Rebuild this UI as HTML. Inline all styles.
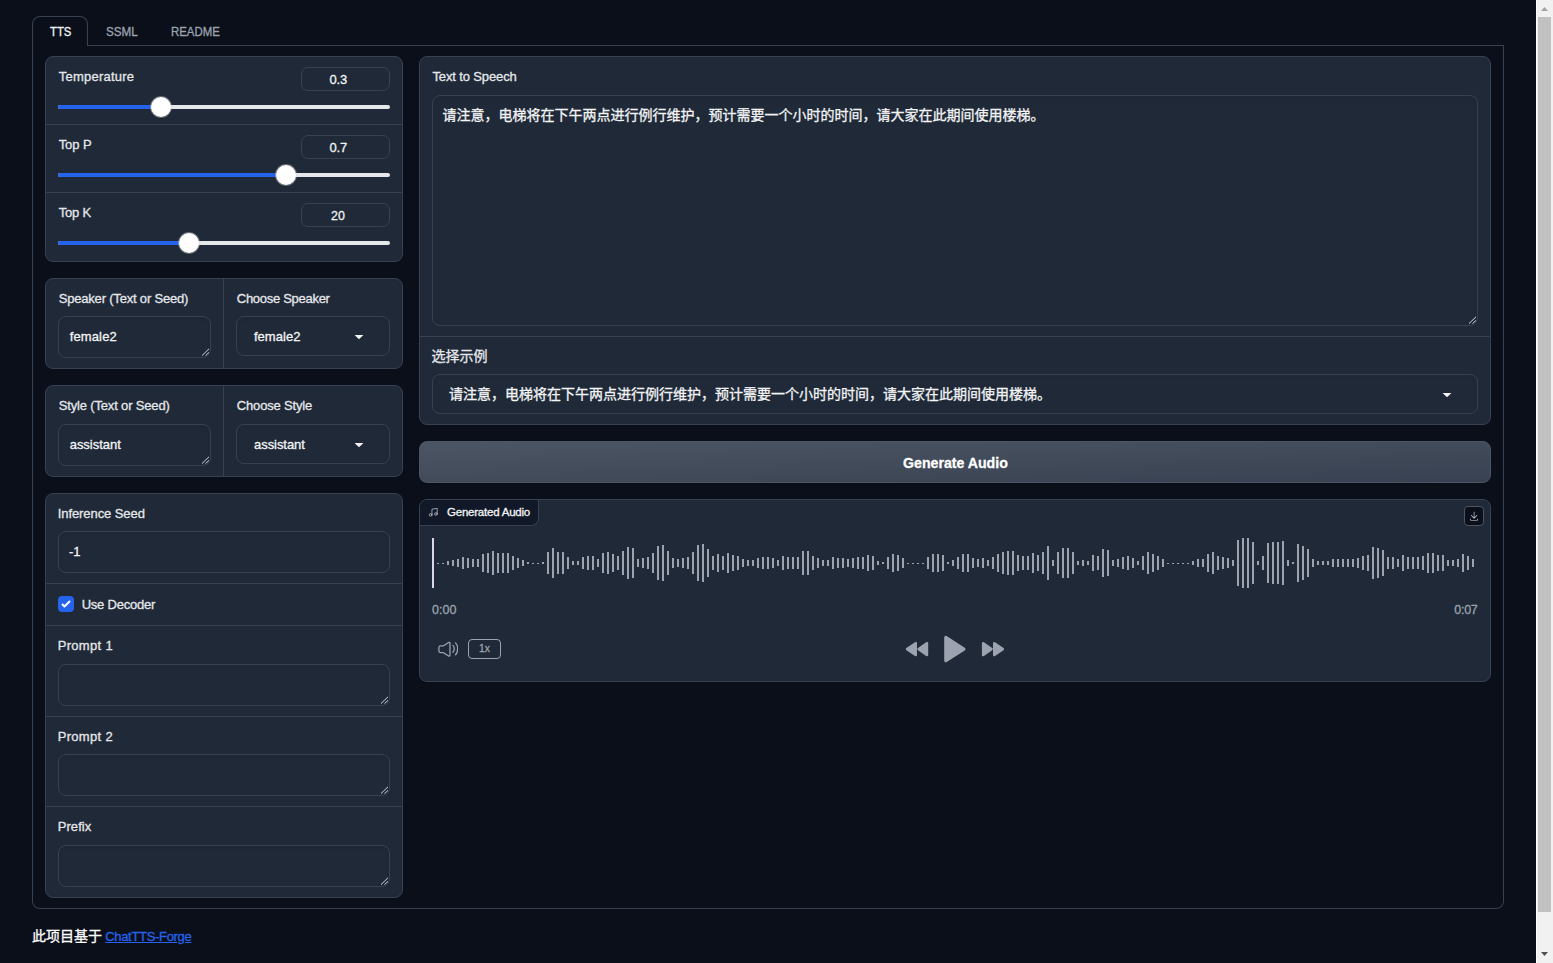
<!DOCTYPE html>
<html lang="zh">
<head>
<meta charset="utf-8">
<title>ChatTTS-Forge WebUI</title>
<style>
html,body{margin:0;padding:0;}
body{width:1553px;height:963px;overflow:hidden;background:#0b0f19;font-family:"Liberation Sans",sans-serif;color:#f3f4f6;}
#app{position:relative;width:1553px;height:963px;overflow:hidden;background:#0b0f19;}
.abs{position:absolute;display:block;}
.t{position:absolute;white-space:nowrap;line-height:1;-webkit-text-stroke:0.3px;font-family:"Liberation Sans",sans-serif;margin:0;padding:0;}
.zh{font-family:"Liberation Sans","Noto Sans CJK SC",sans-serif;font-size:14px;}
.panel{position:absolute;box-sizing:border-box;background:#1f2937;border:1px solid #374151;border-radius:8px;}
.hsep{position:absolute;height:1px;background:#374151;}
.vsep{position:absolute;width:1px;background:#374151;}
.inp{position:absolute;box-sizing:border-box;background:#1f2937;border:1px solid #374151;border-radius:8px;box-shadow:inset 0 2px 4px 0 rgba(0,0,0,.05);}
.num{position:absolute;box-sizing:border-box;width:89px;height:24px;background:#1f2937;border:1px solid #374151;border-radius:7px;}
.track{position:absolute;left:58px;width:332px;height:4px;border-radius:2px;background:#e5e7eb;}
.fill{height:4px;border-radius:2px 0 0 2px;background:#2563eb;}
.thumb{position:absolute;width:20px;height:20px;border-radius:50%;background:#fff;box-shadow:0 0 0 1px rgba(247,246,245,.35),0 1px 2px 0 rgba(0,0,0,.35);}
.tabline{position:absolute;left:32px;top:45px;width:1472px;height:1px;background:#374151;}
.tabsel{position:absolute;box-sizing:border-box;left:32px;top:16px;width:56px;height:30px;border:1px solid #374151;border-bottom:none;border-radius:8px 8px 0 0;background:#0b0f19;}
.tabbody{position:absolute;box-sizing:border-box;left:32px;top:45px;width:1472px;height:864px;border:1px solid #374151;border-top:none;border-radius:0 0 8px 8px;}
.btn{position:absolute;box-sizing:border-box;left:419px;top:441px;width:1072px;height:42px;border:1px solid #4b5563;border-radius:8px;background:linear-gradient(to bottom right,#4b5563,#374151);box-shadow:0 1px 2px 0 rgba(0,0,0,.05);}
.alabel{position:absolute;box-sizing:border-box;left:420px;top:500px;width:119px;height:26px;background:#111827;border-right:1px solid #374151;border-bottom:1px solid #374151;border-radius:7px 0 8px 0;}
.dl{position:absolute;box-sizing:border-box;left:1464px;top:506px;width:20px;height:20px;background:#0b0f19;border:1px solid #4b5563;border-radius:4px;}
.spd{position:absolute;box-sizing:border-box;left:468px;top:639px;width:33px;height:20px;border:1px solid #9ca3af;border-radius:4px;}
.chk{position:absolute;left:58px;top:596px;width:16px;height:16px;border-radius:4px;background:#2563eb;}
.sb{position:absolute;left:1536px;top:0;width:17px;height:963px;background:#f1f1f1;border-left:1px solid #fff;box-sizing:border-box;}
.sbt{position:absolute;left:1538px;top:17px;width:13px;height:895px;background:#c1c1c1;}
a{color:#2563eb;text-decoration:underline;}
</style>
</head>
<body>
<div id="app">
<!-- tabs -->
<div class="tabbody"></div>
<div class="tabline"></div>
<div class="tabsel"></div>
<span class="t" style="left:49.50px;top:25.00px;font-size:13px;color:#f3f4f6;transform:scaleX(0.8681);transform-origin:0 0;">TTS</span><span class="t" style="left:105.70px;top:25.00px;font-size:13px;color:#9ca3af;transform:scaleX(0.8985);transform-origin:0 0;">SSML</span><span class="t" style="left:170.92px;top:25.00px;font-size:13px;color:#9ca3af;transform:scaleX(0.8790);transform-origin:0 0;">README</span>

<!-- sliders -->
<div class="panel" style="left:45px;top:56px;width:358px;height:206px"></div>
<div class="hsep" style="left:46px;top:124px;width:356px"></div>
<div class="hsep" style="left:46px;top:192px;width:356px"></div>
<span class="t" style="left:58.70px;top:70.00px;font-size:13px;color:#e5e7eb;letter-spacing:0.235px;">Temperature</span><div class="num" style="left:301px;top:67px"></div><span class="t" style="left:329.50px;top:73.00px;font-size:13px;color:#f3f4f6;letter-spacing:-0.221px;">0.3</span><div class="track" style="top:105px"><div class="fill" style="width:103px"></div></div><div class="thumb" style="left:151px;top:97px"></div><span class="t" style="left:58.70px;top:138.00px;font-size:13px;color:#e5e7eb;letter-spacing:-0.093px;">Top P</span><div class="num" style="left:301px;top:135px"></div><span class="t" style="left:329.50px;top:141.00px;font-size:13px;color:#f3f4f6;letter-spacing:-0.221px;">0.7</span><div class="track" style="top:173px"><div class="fill" style="width:228px"></div></div><div class="thumb" style="left:276px;top:165px"></div><span class="t" style="left:58.70px;top:206.00px;font-size:13px;color:#e5e7eb;letter-spacing:-0.218px;">Top K</span><div class="num" style="left:301px;top:203px"></div><span class="t" style="left:331.10px;top:209.00px;font-size:13px;color:#f3f4f6;transform:scaleX(0.9557);transform-origin:0 0;">20</span><div class="track" style="top:241px"><div class="fill" style="width:131px"></div></div><div class="thumb" style="left:179px;top:233px"></div>

<!-- speaker -->
<div class="panel" style="left:45px;top:278px;width:358px;height:91px"></div>
<div class="vsep" style="left:223px;top:279px;height:89px"></div>
<span class="t" style="left:58.70px;top:292.00px;font-size:13px;color:#e5e7eb;letter-spacing:-0.188px;">Speaker (Text or Seed)</span><span class="t" style="left:236.80px;top:292.00px;font-size:13px;color:#e5e7eb;letter-spacing:-0.285px;">Choose Speaker</span>
<div class="inp" style="left:58px;top:316px;width:153px;height:42px"></div><svg class="abs" style="left:200px;top:347px" width="10" height="10" viewBox="0 0 10 10"><path d="M2 8.6 9 1.8M5.5 8.6 9 5.4" stroke="#d1d5db" stroke-width="1" fill="none"/></svg><span class="t" style="left:69.70px;top:330.00px;font-size:13px;color:#f3f4f6;letter-spacing:0.130px;">female2</span>
<div class="inp" style="left:236px;top:316px;width:154px;height:40px"></div><span class="t" style="left:253.90px;top:330.00px;font-size:13px;color:#f3f4f6;letter-spacing:0.063px;">female2</span><svg class="abs" style="left:349.2px;top:326.0px" width="20" height="20" viewBox="0 0 18 18"><path d="M5 8l4 4 4-4z" fill="#f3f4f6"/></svg>

<!-- style -->
<div class="panel" style="left:45px;top:385px;width:358px;height:92px"></div>
<div class="vsep" style="left:223px;top:386px;height:90px"></div>
<span class="t" style="left:58.70px;top:399.00px;font-size:13px;color:#e5e7eb;letter-spacing:-0.159px;">Style (Text or Seed)</span><span class="t" style="left:236.80px;top:399.00px;font-size:13px;color:#e5e7eb;letter-spacing:-0.172px;">Choose Style</span>
<div class="inp" style="left:58px;top:424px;width:153px;height:42px"></div><svg class="abs" style="left:200px;top:455px" width="10" height="10" viewBox="0 0 10 10"><path d="M2 8.6 9 1.8M5.5 8.6 9 5.4" stroke="#d1d5db" stroke-width="1" fill="none"/></svg><span class="t" style="left:69.70px;top:438.00px;font-size:13px;color:#f3f4f6;letter-spacing:-0.024px;">assistant</span>
<div class="inp" style="left:236px;top:424px;width:154px;height:40px"></div><span class="t" style="left:254.00px;top:438.00px;font-size:13px;color:#f3f4f6;letter-spacing:-0.049px;">assistant</span><svg class="abs" style="left:349.2px;top:434.0px" width="20" height="20" viewBox="0 0 18 18"><path d="M5 8l4 4 4-4z" fill="#f3f4f6"/></svg>

<!-- inference -->
<div class="panel" style="left:45px;top:493px;width:358px;height:405px"></div>
<div class="hsep" style="left:46px;top:583px;width:356px"></div>
<div class="hsep" style="left:46px;top:625px;width:356px"></div>
<div class="hsep" style="left:46px;top:716px;width:356px"></div>
<div class="hsep" style="left:46px;top:806px;width:356px"></div>
<span class="t" style="left:57.70px;top:507.00px;font-size:13px;color:#e5e7eb;letter-spacing:-0.073px;">Inference Seed</span>
<div class="inp" style="left:58px;top:531px;width:332px;height:42px"></div><span class="t" style="left:69.10px;top:545.00px;font-size:13px;color:#f3f4f6;letter-spacing:-0.129px;">-1</span>
<div class="chk"><svg class="abs" width="16" height="16" viewBox="0 0 16 16"><path fill="#fff" d="M12.207 4.793a1 1 0 010 1.414l-5 5a1 1 0 01-1.414 0l-2-2a1 1 0 011.414-1.414L6.5 9.086l4.293-4.293a1 1 0 011.414 0z"/></svg></div>
<span class="t" style="left:81.70px;top:598.00px;font-size:13px;color:#e5e7eb;letter-spacing:-0.234px;">Use Decoder</span><span class="t" style="left:57.70px;top:639.00px;font-size:13px;color:#e5e7eb;letter-spacing:0.312px;">Prompt 1</span>
<div class="inp" style="left:58px;top:664px;width:332px;height:42px"></div><svg class="abs" style="left:379px;top:695px" width="10" height="10" viewBox="0 0 10 10"><path d="M2 8.6 9 1.8M5.5 8.6 9 5.4" stroke="#d1d5db" stroke-width="1" fill="none"/></svg><span class="t" style="left:57.70px;top:730.00px;font-size:13px;color:#e5e7eb;letter-spacing:0.312px;">Prompt 2</span>
<div class="inp" style="left:58px;top:754px;width:332px;height:42px"></div><svg class="abs" style="left:379px;top:785px" width="10" height="10" viewBox="0 0 10 10"><path d="M2 8.6 9 1.8M5.5 8.6 9 5.4" stroke="#d1d5db" stroke-width="1" fill="none"/></svg><span class="t" style="left:57.70px;top:820.00px;font-size:13px;color:#e5e7eb;letter-spacing:0.074px;">Prefix</span>
<div class="inp" style="left:58px;top:845px;width:332px;height:42px"></div><svg class="abs" style="left:379px;top:876px" width="10" height="10" viewBox="0 0 10 10"><path d="M2 8.6 9 1.8M5.5 8.6 9 5.4" stroke="#d1d5db" stroke-width="1" fill="none"/></svg>

<!-- text to speech -->
<div class="panel" style="left:419px;top:56px;width:1072px;height:369px"></div>
<div class="hsep" style="left:420px;top:336px;width:1070px"></div>
<span class="t" style="left:432.50px;top:70.00px;font-size:13px;color:#e5e7eb;letter-spacing:-0.136px;">Text to Speech</span>
<div class="inp" style="left:432px;top:95px;width:1046px;height:231px"></div><svg class="abs" style="left:1467px;top:315px" width="10" height="10" viewBox="0 0 10 10"><path d="M2 8.6 9 1.8M5.5 8.6 9 5.4" stroke="#d1d5db" stroke-width="1" fill="none"/></svg><span class="t zh" style="left:442.60px;top:108.00px;color:#f3f4f6;">请注意，电梯将在下午两点进行例行维护，预计需要一个小时的时间，请大家在此期间使用楼梯。</span><span class="t zh" style="left:431.58px;top:349.00px;color:#e5e7eb;">选择示例</span>
<div class="inp" style="left:432px;top:374px;width:1046px;height:40px"></div><span class="t zh" style="left:448.90px;top:387.00px;color:#f3f4f6;">请注意，电梯将在下午两点进行例行维护，预计需要一个小时的时间，请大家在此期间使用楼梯。</span><svg class="abs" style="left:1437.0px;top:383.6px" width="20" height="20" viewBox="0 0 18 18"><path d="M5 8l4 4 4-4z" fill="#f3f4f6"/></svg>

<!-- button -->
<div class="btn"></div><span class="t" style="left:902.70px;top:455.00px;font-size:15px;color:#fff;transform:scaleX(0.9433);transform-origin:0 0;font-weight:700;">Generate Audio</span>

<!-- audio -->
<div class="panel" style="left:419px;top:499px;width:1072px;height:183px"></div>
<div class="alabel"></div>
<svg class="abs" style="left:427.6px;top:506.7px" width="10.5" height="10.5" viewBox="0 0 24 24" fill="none" stroke="#c3c8d0" stroke-width="1.7" stroke-linecap="round" stroke-linejoin="round"><path d="M9 18V5l12-2v13"/><circle cx="6" cy="18" r="3"/><circle cx="18" cy="16" r="3"/></svg>
<span class="t" style="left:447.00px;top:507.00px;font-size:11.5px;color:#f3f4f6;letter-spacing:-0.218px;">Generated Audio</span>
<div class="dl"><svg class="abs" style="left:3.95px;top:4px" width="10.2" height="10.2" viewBox="0 0 32 32"><path fill="#dfe2e7" d="M26 24v4H6v-4H4v4a2 2 0 0 0 2 2h20a2 2 0 0 0 2-2v-4zm0-10l-1.41-1.41L17 20.17V2h-2v18.17l-7.59-7.58L6 14l10 10l10-10z"/></svg></div>
<svg class="abs" style="left:432px;top:538px" width="1045" height="50" viewBox="0 0 1045 50"><path fill="#9ca3af" d="M5 25h2v1h-2zM10 25h2v1h-2zM15 23h2v4h-2zM20 22h2v6h-2zM25 21h2v8h-2zM30 19h2v12h-2zM35 20h2v10h-2zM40 21h2v8h-2zM45 21h2v8h-2zM50 16h2v18h-2zM55 15h2v20h-2zM60 13h2v24h-2zM65 15h2v20h-2zM70 15h2v20h-2zM75 15h2v20h-2zM80 18h2v14h-2zM85 20h2v10h-2zM90 22h2v6h-2zM95 24h2v2h-2zM100 25h2v1h-2zM105 25h2v1h-2zM110 24h2v2h-2zM115 14h2v22h-2zM120 10h2v30h-2zM125 14h2v22h-2zM130 14h2v22h-2zM135 19h2v12h-2zM140 23h2v4h-2zM145 23h2v4h-2zM150 19h2v12h-2zM155 18h2v14h-2zM160 18h2v14h-2zM165 21h2v8h-2zM170 15h2v20h-2zM175 14h2v22h-2zM180 16h2v18h-2zM185 18h2v14h-2zM190 13h2v24h-2zM195 9h2v32h-2zM200 10h2v30h-2zM205 21h2v8h-2zM210 20h2v10h-2zM215 19h2v12h-2zM220 15h2v20h-2zM225 8h2v34h-2zM230 7h2v36h-2zM235 13h2v24h-2zM240 20h2v10h-2zM245 21h2v8h-2zM250 20h2v10h-2zM255 19h2v12h-2zM260 14h2v22h-2zM265 7h2v36h-2zM270 6h2v38h-2zM275 11h2v28h-2zM280 18h2v14h-2zM285 16h2v18h-2zM290 18h2v14h-2zM295 15h2v20h-2zM300 17h2v16h-2zM305 18h2v14h-2zM310 21h2v8h-2zM315 22h2v6h-2zM320 22h2v6h-2zM325 20h2v10h-2zM330 19h2v12h-2zM335 19h2v12h-2zM340 20h2v10h-2zM345 22h2v6h-2zM350 18h2v14h-2zM355 19h2v12h-2zM360 19h2v12h-2zM365 19h2v12h-2zM370 13h2v24h-2zM375 13h2v24h-2zM380 18h2v14h-2zM385 20h2v10h-2zM390 22h2v6h-2zM395 22h2v6h-2zM400 19h2v12h-2zM405 20h2v10h-2zM410 20h2v10h-2zM415 21h2v8h-2zM420 20h2v10h-2zM425 19h2v12h-2zM430 19h2v12h-2zM435 17h2v16h-2zM440 18h2v14h-2zM445 23h2v4h-2zM450 24h2v2h-2zM455 19h2v12h-2zM460 16h2v18h-2zM465 17h2v16h-2zM470 20h2v10h-2zM475 25h2v1h-2zM480 25h2v1h-2zM485 25h2v1h-2zM490 25h2v1h-2zM495 19h2v12h-2zM500 16h2v18h-2zM505 16h2v18h-2zM510 17h2v16h-2zM515 24h2v2h-2zM520 22h2v6h-2zM525 19h2v12h-2zM530 16h2v18h-2zM535 16h2v18h-2zM540 20h2v10h-2zM545 21h2v8h-2zM550 20h2v10h-2zM555 22h2v6h-2zM560 19h2v12h-2zM565 16h2v18h-2zM570 14h2v22h-2zM575 13h2v24h-2zM580 13h2v24h-2zM585 17h2v16h-2zM590 18h2v14h-2zM595 18h2v14h-2zM600 15h2v20h-2zM605 17h2v16h-2zM610 14h2v22h-2zM615 8h2v34h-2zM620 22h2v6h-2zM625 14h2v22h-2zM630 10h2v30h-2zM635 10h2v30h-2zM640 14h2v22h-2zM645 23h2v4h-2zM650 22h2v6h-2zM655 23h2v4h-2zM660 17h2v16h-2zM665 18h2v14h-2zM670 11h2v28h-2zM675 12h2v26h-2zM680 22h2v6h-2zM685 21h2v8h-2zM690 19h2v12h-2zM695 18h2v14h-2zM700 20h2v10h-2zM705 23h2v4h-2zM710 18h2v14h-2zM715 14h2v22h-2zM720 16h2v18h-2zM725 18h2v14h-2zM730 21h2v8h-2zM735 25h2v1h-2zM740 25h2v1h-2zM745 25h2v1h-2zM750 25h2v1h-2zM755 25h2v1h-2zM760 23h2v4h-2zM765 21h2v8h-2zM770 21h2v8h-2zM775 16h2v18h-2zM780 14h2v22h-2zM785 18h2v14h-2zM790 19h2v12h-2zM795 20h2v10h-2zM800 22h2v6h-2zM805 2h2v46h-2zM810 0h2v50h-2zM815 0h2v50h-2zM820 4h2v42h-2zM825 23h2v4h-2zM830 18h2v14h-2zM835 5h2v40h-2zM840 4h2v42h-2zM845 4h2v42h-2zM850 3h2v44h-2zM855 22h2v6h-2zM860 24h2v2h-2zM865 6h2v38h-2zM870 8h2v34h-2zM875 11h2v28h-2zM880 21h2v8h-2zM885 23h2v4h-2zM890 23h2v4h-2zM895 23h2v4h-2zM900 21h2v8h-2zM905 21h2v8h-2zM910 21h2v8h-2zM915 21h2v8h-2zM920 21h2v8h-2zM925 20h2v10h-2zM930 18h2v14h-2zM935 17h2v16h-2zM940 9h2v32h-2zM945 10h2v30h-2zM950 12h2v26h-2zM955 19h2v12h-2zM960 19h2v12h-2zM965 21h2v8h-2zM970 17h2v16h-2zM975 19h2v12h-2zM980 19h2v12h-2zM985 19h2v12h-2zM990 18h2v14h-2zM995 15h2v20h-2zM1000 15h2v20h-2zM1005 17h2v16h-2zM1010 17h2v16h-2zM1015 22h2v6h-2zM1020 22h2v6h-2zM1025 21h2v8h-2zM1030 16h2v18h-2zM1035 18h2v14h-2zM1040 21h2v8h-2z"/><rect x="0" y="0" width="2" height="50" fill="#ddd5e9"/></svg><span class="t" style="left:431.90px;top:604.00px;font-size:12.5px;color:#9ca3af;letter-spacing:0.074px;">0:00</span><span class="t" style="left:1454.30px;top:604.00px;font-size:12.5px;color:#9ca3af;letter-spacing:-0.292px;">0:07</span>
<svg class="abs" style="left:437.8px;top:638.7px" width="20.5" height="20.5" viewBox="0 0 24 24" fill="none" stroke="#9ca3af" stroke-width="1.5"><path d="M1 13.8571V10.1429C1 9.03829 1.89543 8.14286 3 8.14286H5.9C6.09569 8.14286 6.28708 8.08544 6.45046 7.97772L12.4495 4.02228C13.1144 3.5839 14 4.06075 14 4.85714V19.1429C14 19.9392 13.1144 20.4161 12.4495 19.9777L6.45046 16.0223C6.28708 15.9146 6.09569 15.8571 5.9 15.8571H3C1.89543 15.8571 1 14.9617 1 13.8571Z"/><path d="M17.5 7.5C17.5 7.5 19 9 19 11.5C19 14 17.5 15.5 17.5 15.5" stroke-linecap="round"/><path d="M20.5 4.5C20.5 4.5 23 7 23 11.5C23 16 20.5 18.5 20.5 18.5" stroke-linecap="round"/></svg>
<div class="spd"></div><span class="t" style="left:479.20px;top:643.00px;font-size:11px;color:#9ca3af;transform:scaleX(0.9325);transform-origin:0 0;">1x</span>
<svg class="abs" style="left:900px;top:630px" width="110" height="40" viewBox="900 630 110 40" fill="#9ca3af" stroke="#9ca3af" stroke-linejoin="round">
<path stroke-width="2.6" d="M907.1 649.1 915.7 643.2V655zM918.7 649.1 926.9 643.2V655z"/>
<path stroke-width="3.2" d="M945.8 637.4 963.9 649.05 945.8 660.7z"/>
<path stroke-width="2.6" d="M983.2 643.2 991.5 649.1 983.2 655zM994.3 643.2 1002.8 649.1 994.3 655z"/>
</svg>

<!-- footer -->
<span class="t zh" style="left:31.99px;top:929.20px;color:#ffffff;">此项目基于</span><a class="t" style="left:105.20px;top:930.00px;font-size:13px;color:#2563eb;letter-spacing:-0.314px;text-decoration:underline;text-underline-offset:1px;">ChatTTS-Forge</a>

<!-- scrollbar -->
<div class="sb"></div><div class="sbt"></div>
<svg class="abs" style="left:1537px;top:0" width="16" height="17" viewBox="0 0 16 17"><path d="M4 11 7.5 7 11 11z" fill="#a3a3a3"/></svg>
<svg class="abs" style="left:1537px;top:946px" width="16" height="17" viewBox="0 0 16 17"><path d="M4 6 7.5 10 11 6z" fill="#505050"/></svg>
</div>
</body>
</html>
